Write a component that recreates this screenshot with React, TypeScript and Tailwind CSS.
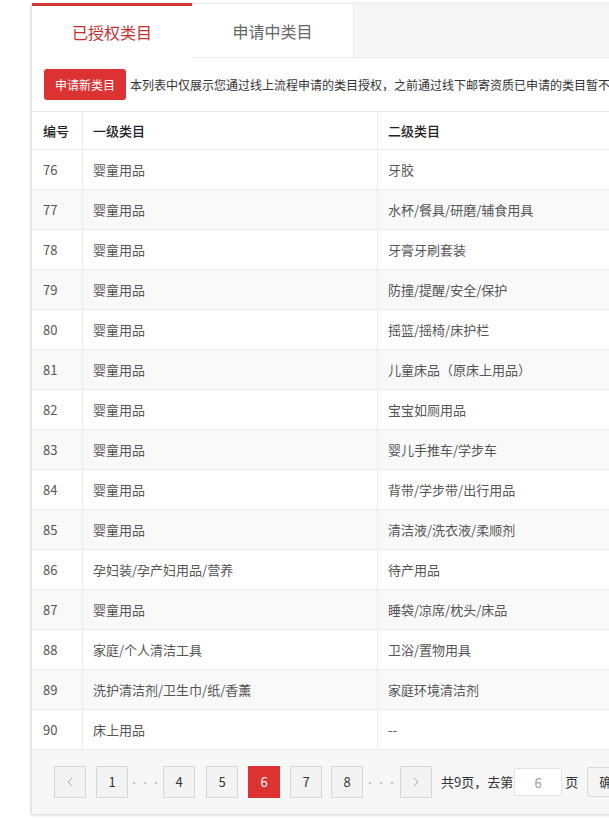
import { ChevronLeft, ChevronRight } from "lucide-react";

interface Row {
  id: number;
  first: string;
  second: string;
}

const rows: Row[] = [
  { id: 76, first: "婴童用品", second: "牙胶" },
  { id: 77, first: "婴童用品", second: "水杯/餐具/研磨/辅食用具" },
  { id: 78, first: "婴童用品", second: "牙膏牙刷套装" },
  { id: 79, first: "婴童用品", second: "防撞/提醒/安全/保护" },
  { id: 80, first: "婴童用品", second: "摇篮/摇椅/床护栏" },
  { id: 81, first: "婴童用品", second: "儿童床品（原床上用品）" },
  { id: 82, first: "婴童用品", second: "宝宝如厕用品" },
  { id: 83, first: "婴童用品", second: "婴儿手推车/学步车" },
  { id: 84, first: "婴童用品", second: "背带/学步带/出行用品" },
  { id: 85, first: "婴童用品", second: "清洁液/洗衣液/柔顺剂" },
  { id: 86, first: "孕妇装/孕产妇用品/营养", second: "待产用品" },
  { id: 87, first: "婴童用品", second: "睡袋/凉席/枕头/床品" },
  { id: 88, first: "家庭/个人清洁工具", second: "卫浴/置物用具" },
  { id: 89, first: "洗护清洁剂/卫生巾/纸/香薰", second: "家庭环境清洁剂" },
  { id: 90, first: "床上用品", second: "--" },
];

function PageBtn({ children, active }: { children: React.ReactNode; active?: boolean }) {
  return (
    <button
      className={
        active
          ? "h-8 w-8 shrink-0 flex items-center justify-center border border-[#dc3232] bg-[#dc3232] text-white text-[13px]"
          : "h-8 w-8 shrink-0 flex items-center justify-center border border-[#d6d6d6] bg-[#f3f3f3] text-[#333] text-[13px]"
      }
    >
      {children}
    </button>
  );
}

function Dots({ w }: { w: string }) {
  return <span className={w + " shrink-0 text-center text-[10px] tracking-[1px] text-[#bbb]"}>···</span>;
}

export default function App() {
  return (
    <div
      className="w-[609px] h-[820px] overflow-hidden bg-white pt-[3px] pl-[32px]"
      style={{ fontFamily: '"Microsoft YaHei", "Noto Sans CJK SC", "Noto Sans", sans-serif' }}
    >
      <div className="w-[640px] bg-white shadow-[-1px_1px_3px_rgba(0,0,0,0.18)]">
        {/* Tabs */}
        <div className="flex h-[55px] bg-[#f6f6f6] border-b border-[#ececec]">
          <div className="w-[160px] -mb-px bg-white border-t-[3px] border-[#d23a3a] flex items-center justify-center text-[16px] text-[#c5302e]">
            已授权类目
          </div>
          <div className="w-[161px] bg-white border-t border-[#ececec] flex items-center justify-center text-[16px] text-[#666]">
            申请中类目
          </div>
          <div className="flex-1 border-t border-l border-[#ececec]" />
        </div>

        {/* Notice */}
        <div className="flex items-center h-[53px] px-[12px] gap-[4px]">
          <button className="h-[31px] w-[82px] shrink-0 rounded-[3px] bg-[#dc3232] text-white text-[12px]">
            申请新类目
          </button>
          <span className="whitespace-nowrap text-[12px] text-[#333]">
            本列表中仅展示您通过线上流程申请的类目授权，之前通过线下邮寄资质已申请的类目暂不在此列表中显示
          </span>
        </div>

        {/* Table */}
        <div className="border-t border-[#e6e6e6] text-[13px]">
          <div className="flex h-[38px] border-b border-[#e6e6e6] font-medium text-[#222]">
            <div className="w-[51px] shrink-0 pl-[11px] flex items-center border-r border-[#ececec]">编号</div>
            <div className="w-[295px] shrink-0 pl-[10px] flex items-center border-r border-[#ececec]">一级类目</div>
            <div className="flex-1 pl-[10px] flex items-center">二级类目</div>
          </div>
          {rows.map((r, i) => (
            <div
              key={r.id}
              className={
                "flex h-[40px] border-b border-[#ececec] text-[#555] " + (i % 2 === 1 ? "bg-[#f9f9f9]" : "bg-white")
              }
            >
              <div className="w-[51px] shrink-0 pl-[11px] flex items-center border-r border-[#ececec]">{r.id}</div>
              <div className="w-[295px] shrink-0 pl-[10px] flex items-center border-r border-[#ececec]">{r.first}</div>
              <div className="flex-1 pl-[10px] flex items-center">{r.second}</div>
            </div>
          ))}
        </div>

        {/* Pagination */}
        <div className="flex items-center h-[64px] bg-[#f7f7f7] pl-[22px] text-[13px]">
          <PageBtn>
            <ChevronLeft className="h-4 w-4 text-[#999]" strokeWidth={1.2} />
          </PageBtn>
          <div className="w-[10px]" />
          <PageBtn>1</PageBtn>
          <Dots w="w-[35px]" />
          <PageBtn>4</PageBtn>
          <div className="w-[11px]" />
          <PageBtn>5</PageBtn>
          <div className="w-[10px]" />
          <PageBtn active>6</PageBtn>
          <div className="w-[10px]" />
          <PageBtn>7</PageBtn>
          <div className="w-[9px]" />
          <PageBtn>8</PageBtn>
          <Dots w="w-[37px]" />
          <PageBtn>
            <ChevronRight className="h-4 w-4 text-[#999]" strokeWidth={1.2} />
          </PageBtn>
          <span className="ml-[9px] text-[#333] whitespace-nowrap">共9页，去第</span>
          <input
            readOnly
            value="6"
            className="ml-[1px] h-[28px] w-[48px] border border-[#e3e3e3] bg-white text-center text-[13px] text-[#999] outline-none"
          />
          <span className="ml-[3px] text-[#333]">页</span>
          <button className="ml-[9px] h-[30px] w-[50px] shrink-0 border border-[#d9d9d9] bg-[#f5f5f5] text-[#333] text-[13px] rounded-[2px]">
            确定
          </button>
        </div>
      </div>
    </div>
  );
}
